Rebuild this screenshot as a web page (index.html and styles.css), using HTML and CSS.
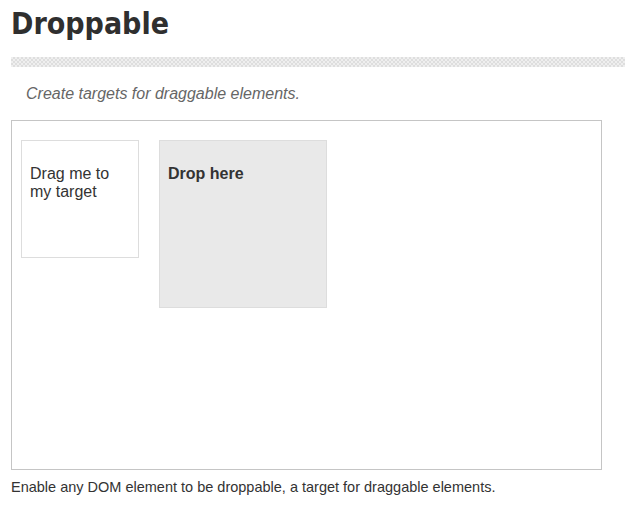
FILE: index.html
```html
<!DOCTYPE html>
<html lang="en">
<head>
<meta charset="utf-8">
<title>Droppable</title>
<link rel="stylesheet" href="styles.css">
</head>
<body>
<h1 class="title">Droppable</h1>
<div class="stripe"></div>
<p class="subtitle">Create targets for draggable elements.</p>
<div class="demo">
  <div class="draggable"><p>Drag me to my target</p></div>
  <div class="droppable"><p>Drop here</p></div>
</div>
<p class="desc">Enable any DOM element to be droppable, a target for draggable elements.</p>
</body>
</html>
```
FILE: styles.css
```css
html, body {
  background: #fff;
}
body {
  margin: 0;
  padding: 0 11px;
  font-family: "Liberation Sans", Arial, sans-serif;
  color: #333;
}
.title {
  margin: 0;
  padding-top: 6px;
  font-family: "DejaVu Sans Condensed", "DejaVu Sans", sans-serif;
  font-stretch: condensed;
  font-weight: bold;
  font-size: 30px;
  line-height: 36px;
  color: #2f2f2f;
}
.stripe {
  margin-top: 15px;
  width: 614px;
  height: 10px;
  background: repeating-conic-gradient(#dedede 0 25%, #efefef 0 50%) 0 0 / 4px 4px;
}
.subtitle {
  margin: 18px 0 0;
  padding-left: 15px;
  font-style: italic;
  font-size: 16px;
  line-height: 18px;
  color: #666;
}
.demo {
  box-sizing: border-box;
  margin-top: 17px;
  width: 591px;
  height: 350px;
  padding: 9px;
  border: 1px solid #c5c5c5;
  display: flex;
  align-items: flex-start;
}
.draggable,
.droppable {
  padding: 8px;
  border: 1px solid #dddddd;
  font-size: 16px;
  line-height: 1.1;
  color: #333;
}
.draggable p,
.droppable p {
  margin: 16px 0;
}
.draggable {
  width: 100px;
  height: 100px;
  margin: 10px 10px 10px 0;
  background: #fff;
}
.droppable {
  width: 150px;
  height: 150px;
  margin: 10px;
  background: #e9e9e9;
  font-weight: bold;
}
.desc {
  margin: 9px 0 0;
  font-size: 14.5px;
  line-height: 16px;
  color: #333;
}
```
